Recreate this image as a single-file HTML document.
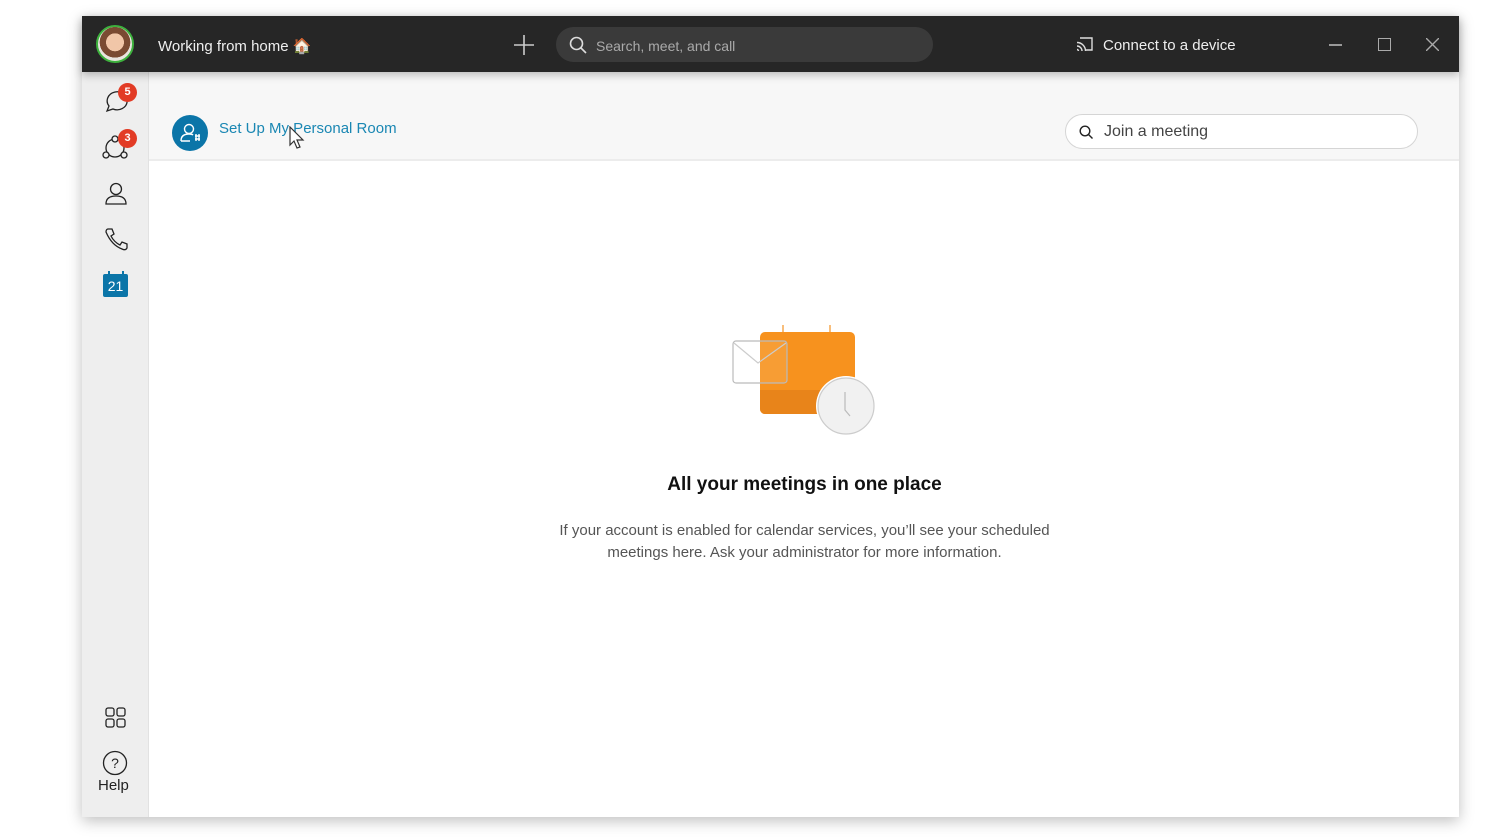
<!DOCTYPE html>
<html><head><meta charset="utf-8"><style>
*{margin:0;padding:0;box-sizing:border-box}
body{width:1500px;height:840px;background:#fff;position:relative;overflow:hidden;font-family:"Liberation Sans",sans-serif}
.win{position:absolute;left:82px;top:16px;width:1377px;height:801px;box-shadow:0 4px 14px rgba(0,0,0,.25);background:#fff}
.title{position:absolute;left:0;top:0;width:100%;height:56px;background:#262626;color:#eee;box-shadow:0 3px 8px rgba(0,0,0,.25);z-index:2}
.side{position:absolute;left:0;top:56px;width:67px;bottom:0;background:#eeeeee;border-right:1px solid #e2e2e2}
.head{position:absolute;left:67px;top:56px;right:0;height:89px;background:#f7f7f7;border-bottom:2px solid #ececec}
.t{position:absolute;white-space:nowrap}
.badge{position:absolute;width:19px;height:19px;border-radius:50%;background:#e23b25;color:#fff;font-size:11px;font-weight:bold;text-align:center;line-height:19px}
</style></head><body>
<div class="win">
 <div class="title">
  <div style="position:absolute;left:14px;top:9px;width:38px;height:38px;border-radius:50%;border:2px solid #3db13d;background:radial-gradient(circle at 50% 45%,#f1c6a8 0 35%,#7a4a32 36% 60%,#e9e4df 61%)"></div>
  <div class="t" style="left:76px;top:21px;font-size:15px">Working from home 🏠</div>
  <svg style="position:absolute;left:431px;top:18px" width="22" height="22"><path d="M11 1v20M1 11h20" stroke="#ccc" stroke-width="1.6"/></svg>
  <div style="position:absolute;left:474px;top:11px;width:377px;height:35px;border-radius:18px;background:#3a3a3a"></div>
  <svg style="position:absolute;left:487px;top:20px" width="18" height="18"><circle cx="7.5" cy="7.5" r="6" fill="none" stroke="#ddd" stroke-width="1.6"/><path d="M12 12l5 5" stroke="#ddd" stroke-width="1.6"/></svg>
  <div class="t" style="left:514px;top:22px;font-size:14px;color:#aaa">Search, meet, and call</div>
  <svg style="position:absolute;left:994px;top:21px" width="18" height="15"><path d="M4 1h12v12h-6M1 9a5 5 0 0 1 5 5M1 5.5a8.5 8.5 0 0 1 8.5 8.5M1 12.5a1.5 1.5 0 0 1 1.5 1.5" fill="none" stroke="#ddd" stroke-width="1.4"/></svg>
  <div class="t" style="left:1021px;top:21px;font-size:15px">Connect to a device</div>
  <div style="position:absolute;left:1247px;top:28px;width:13px;height:1.5px;background:#999"></div>
  <div style="position:absolute;left:1296px;top:22px;width:13px;height:13px;border:1.5px solid #aaa"></div>
  <svg style="position:absolute;left:1344px;top:22px" width="13" height="13"><path d="M0 0l13 13M13 0L0 13" stroke="#aaa" stroke-width="1.4"/></svg>
 </div>
 <div class="side">
  <svg style="position:absolute;left:20px;top:15px" width="28" height="28"><path d="M5 24l2-5A10 9 0 1 1 11 22z" fill="none" stroke="#222" stroke-width="1.3"/></svg>
  <div class="badge" style="left:36px;top:11px">5</div>
  <svg style="position:absolute;left:19px;top:62px" width="30" height="28"><circle cx="14" cy="14" r="9" fill="none" stroke="#222" stroke-width="1.3"/><circle cx="14" cy="5" r="3" fill="#eee" stroke="#222" stroke-width="1.3"/><circle cx="5" cy="21" r="3" fill="#eee" stroke="#222" stroke-width="1.3"/><circle cx="23" cy="21" r="3" fill="#eee" stroke="#222" stroke-width="1.3"/></svg>
  <div class="badge" style="left:36px;top:57px">3</div>
  <svg style="position:absolute;left:22px;top:110px" width="24" height="24"><circle cx="12" cy="7" r="5.5" fill="none" stroke="#222" stroke-width="1.3"/><path d="M2 22c0-6 4-8 10-8s10 2 10 8z" fill="none" stroke="#222" stroke-width="1.3"/></svg>
  <svg style="position:absolute;left:22px;top:155px" width="26" height="26"><path d="M4 2l4 0 2 5-3 2c2 4 5 7 9 9l2-3 5 2v4c-1 2-3 2-5 1C10 19 5 12 2 5 2 3 3 2 4 2z" fill="none" stroke="#222" stroke-width="1.3"/></svg>
  <div style="position:absolute;left:21px;top:202px;width:25px;height:23px;background:#0b75a8;border-radius:2px;color:#fff;font-size:14px;text-align:center;line-height:25px">21</div>
  <div style="position:absolute;left:26px;top:199px;width:1.5px;height:4px;background:#0b75a8"></div><div style="position:absolute;left:40px;top:199px;width:1.5px;height:4px;background:#0b75a8"></div>
  <svg style="position:absolute;left:23px;top:635px" width="22" height="22" fill="none" stroke="#222" stroke-width="1.3"><rect x="1" y="1" width="8" height="8" rx="2"/><rect x="12" y="1" width="8" height="8" rx="2"/><rect x="1" y="12" width="8" height="8" rx="2"/><rect x="12" y="12" width="8" height="8" rx="2"/></svg>
  <svg style="position:absolute;left:20px;top:678px" width="26" height="26"><circle cx="13" cy="13" r="11.5" fill="none" stroke="#222" stroke-width="1.3"/><text x="13" y="18" font-size="14" text-anchor="middle" fill="#222" font-family="Liberation Sans">?</text></svg>
  <div class="t" style="left:16px;top:705px;font-size:15px;color:#222">Help</div>
 </div>
 <div class="head">
  <div style="position:absolute;left:23px;top:43px;width:36px;height:36px;border-radius:50%;background:#0b75a8"></div>
  <svg style="position:absolute;left:31px;top:51px" width="22" height="20" fill="none" stroke="#fff" stroke-width="1.4"><circle cx="9" cy="6" r="4.5"/><path d="M1 18c0-5 3-7 8-7 2 0 3 0 4 1M1 18h9"/><path d="M15 13h5M15 16h5M16 11v7M19 11v7"/></svg>
  <div class="t" style="left:70px;top:48px;font-size:15px;color:#1a87b3">Set Up My Personal Room</div>
  <svg style="position:absolute;left:140px;top:54px" width="16" height="24"><path d="M1 1v18l4-4 3 7 3-1-3-7h6z" fill="#fff" stroke="#333" stroke-width="1.2"/></svg>
  <div style="position:absolute;left:916px;top:42px;width:353px;height:35px;border:1px solid #d5d5d5;border-radius:18px;background:#fff"></div>
  <svg style="position:absolute;left:930px;top:53px" width="15" height="15"><circle cx="6" cy="6" r="4.8" fill="none" stroke="#222" stroke-width="1.4"/><path d="M9.5 9.5l4 4" stroke="#222" stroke-width="1.4"/></svg>
  <div class="t" style="left:955px;top:51px;font-size:16px;color:#444">Join a meeting</div>
 </div>
 <svg style="position:absolute;left:648px;top:306px" width="150" height="116">
  <path d="M53 3v8M100 3v8" stroke="#f39325" stroke-width="1.2"/>
  <rect x="30" y="10" width="95" height="82" rx="5" fill="#f7921e"/>
  <path d="M30 68h95v19a5 5 0 0 1-5 5H35a5 5 0 0 1-5-5z" fill="#e8841a"/>
  <rect x="3" y="19" width="54" height="42" rx="3" fill="rgba(255,255,255,.1)" stroke="#bbb" stroke-width="1.2"/>
  <path d="M4 21l24 20 28-20" fill="none" stroke="#ccc" stroke-width="1.2"/>
  <circle cx="116" cy="84" r="30" fill="#fff"/>
  <circle cx="116" cy="84" r="28" fill="#f1f1f1" stroke="#ccc" stroke-width="1.2"/>
  <path d="M115 70v18l5 6" fill="none" stroke="#bbb" stroke-width="1.2"/>
 </svg>
 <div class="t" style="left:0;width:1445px;text-align:center;top:458px;font-size:19px;font-weight:bold;color:#111">All your meetings in one place</div>
 <div style="position:absolute;left:0;width:1445px;text-align:center;top:504px;font-size:15px;line-height:22px;color:#555">If your account is enabled for calendar services, you’ll see your scheduled<br>meetings here. Ask your administrator for more information.</div>
</div>
</body></html>
